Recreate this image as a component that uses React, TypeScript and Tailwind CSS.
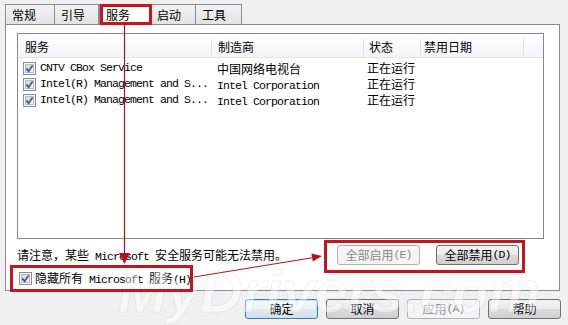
import React from 'react';

const MONO = "font-['Liberation_Mono',monospace] text-[11.5px] tracking-[-0.9px]";
const CJK = "font-['Noto_Sans_CJK_SC',sans-serif] text-[12px]";

function Txt({ s }: { s: string }) {
  const parts = s.split(/([\x20-\x7e]+)/).filter(Boolean);
  return (
    <>
      {parts.map((p, i) =>
        /^[\x20-\x7e]+$/.test(p) ? (
          <span key={i} className={MONO}>
            {p}
          </span>
        ) : (
          <span key={i} className={CJK}>
            {p}
          </span>
        )
      )}
    </>
  );
}

function Check() {
  return (
    <svg width="13" height="13" viewBox="0 0 13 13" className="shrink-0">
      <defs>
        <linearGradient id="cbfill" x1="0" y1="0" x2="1" y2="1">
          <stop offset="0" stopColor="#cdd3dc" />
          <stop offset="1" stopColor="#f6f8fa" />
        </linearGradient>
      </defs>
      <rect x="0.5" y="0.5" width="12" height="12" fill="#f5f5f5" stroke="#8e8f8f" />
      <rect x="2.5" y="2.5" width="8" height="8" fill="url(#cbfill)" stroke="#b7bcc4" />
      <path d="M3.4 6.4 L5.6 9.2 L9.6 3.4" stroke="#3f5a8e" strokeWidth="1.7" fill="none" />
    </svg>
  );
}

const tabs = [
  { label: '常规', w: 'w-[50px]' },
  { label: '引导', w: 'w-[45px]' },
  { label: '服务', w: 'w-[52px]', selected: true },
  { label: '启动', w: 'w-[46px]' },
  { label: '工具', w: 'w-[47px]' },
];

const rows = [
  { name: 'CNTV CBox Service', maker: '中国网络电视台', status: '正在运行' },
  { name: 'Intel(R) Management and S...', maker: 'Intel Corporation', status: '正在运行' },
  { name: 'Intel(R) Management and S...', maker: 'Intel Corporation', status: '正在运行' },
];

function Btn({
  label,
  kind = 'normal',
  w = 'w-[73px]',
}: {
  label: string;
  kind?: 'normal' | 'disabled' | 'default';
  w?: string;
}) {
  const look =
    kind === 'disabled'
      ? 'border-[#adb2b5] bg-[#f4f4f4] text-[#8a8a8a]'
      : kind === 'default'
      ? 'border-[#3c7fb1] bg-[linear-gradient(#f4f8fb_0%,#eef3f7_50%,#e2e9ef_50%,#d6dfe7_100%)] shadow-[inset_0_0_0_1px_#c4e5f6] text-black'
      : 'border-[#707070] bg-[linear-gradient(#f2f2f2_0%,#ebebeb_50%,#dddddd_50%,#cfcfcf_100%)] text-black';
  return (
    <div
      className={`${w} h-[20px] flex items-center justify-center rounded-[3px] border whitespace-pre leading-[16px] ${look}`}
    >
      <Txt s={label} />
    </div>
  );
}

export default function App() {
  return (
    <div className="relative w-[568px] h-[325px] overflow-hidden bg-[#f0f0f0] pt-[4px] pl-[5px] text-black">
      {/* tabs */}
      <div className="flex h-[20px]">
        {tabs.map((t) => (
          <div
            key={t.label}
            className={`${t.w} h-[20px] border border-b-0 border-[#898c95] pl-[6px] pt-[1px] leading-[18px] ${CJK} ${
              t.selected
                ? 'bg-white'
                : 'bg-[linear-gradient(#f3f3f3,#e3e3e3)] -ml-px first:ml-0'
            }`}
          >
            {t.label}
          </div>
        ))}
      </div>

      {/* tab page */}
      <div className="w-[555px] h-[267px] border border-[#898c95] bg-white pl-[11px] pt-[8px]">
        <div className="w-[527px] h-[206px] border border-[#828790] bg-white">
          <div className="flex h-[24px] pt-[3px] items-center bg-[linear-gradient(#ffffff,#f3f4f6)] border-b border-[#e2e3e5] leading-[16px]">
            <div className={`w-[193px] pl-[7px] ${CJK}`}>服务</div>
            <div className={`w-[152px] pl-[6px] border-l border-[#dfe1e4] ${CJK}`}>制造商</div>
            <div className={`w-[57px] pl-[5px] border-l border-[#dfe1e4] ${CJK}`}>状态</div>
            <div className={`w-[103px] pl-[3px] border-l border-[#dfe1e4] ${CJK}`}>禁用日期</div>
            <div className="h-full border-l border-[#dfe1e4]" />
          </div>
          <div className="pt-[2px]">
            {rows.map((r, i) => (
              <div key={i} className="flex items-center h-[16px] leading-[16px] whitespace-pre">
                <div className="w-[193px] flex items-center pl-[5px] gap-[4px]">
                  <Check />
                  <Txt s={r.name} />
                </div>
                <div className="w-[151px] pl-[6px]">
                  <Txt s={r.maker} />
                </div>
                <div className={`pl-[5px] ${CJK}`}>{r.status}</div>
              </div>
            ))}
          </div>
        </div>

        <div className="w-[527px] flex items-center h-[20px] mt-[6px] whitespace-pre leading-[16px]">
          <div>
            <Txt s="请注意，某些 Microsoft 安全服务可能无法禁用。" />
          </div>
          <div className="ml-auto mr-[25px] flex gap-[16px]">
            <Btn label="全部启用(E)" kind="disabled" w="w-[83px]" />
            <Btn label="全部禁用(D)" w="w-[83px]" />
          </div>
        </div>

        <div className="flex items-center gap-[3px] h-[16px] mt-[5px] pl-[2px] whitespace-pre leading-[16px]">
          <Check />
          <span>
            <Txt s="隐藏所有 Microsoft 服务(H)" />
          </span>
        </div>
      </div>

      {/* dialog buttons */}
      <div className="flex justify-end gap-[8px] pr-[7px] mt-[8px]">
        <Btn label="确定" kind="default" />
        <Btn label="取消" />
        <Btn label="应用(A)" kind="disabled" />
        <Btn label="帮助" />
      </div>

      {/* watermark */}
      <div className="absolute left-[118px] top-[262px] pointer-events-none select-none font-['Liberation_Sans',sans-serif] italic font-bold text-[59px] leading-[60px] text-[rgba(255,255,255,0.45)] [-webkit-text-stroke:1px_rgba(190,190,190,0.22)]">
        MyDrivers.com
      </div>

      {/* annotations */}
      <div className="absolute left-[100px] top-[4px] w-[52px] h-[21px] border-[3px] border-[#c8141e]" />
      <div className="absolute left-[10px] top-[265px] w-[183px] h-[27px] border-[3px] border-[#c8141e]" />
      <div className="absolute left-[324px] top-[240px] w-[201px] h-[33px] border-[3px] border-[#c8141e]" />
      <svg className="absolute left-0 top-0 pointer-events-none" width="568" height="325">
        <line x1="124.5" y1="25" x2="124.5" y2="255" stroke="#b3121c" strokeWidth="1.2" />
        <polygon points="119,253 130,253 124.5,264" fill="#b3121c" />
        <line x1="194" y1="277" x2="312" y2="257.8" stroke="#b3121c" strokeWidth="1" />
        <polygon points="322,256 312.8,261.4 311.4,253.6" fill="#b3121c" />
      </svg>
    </div>
  );
}
